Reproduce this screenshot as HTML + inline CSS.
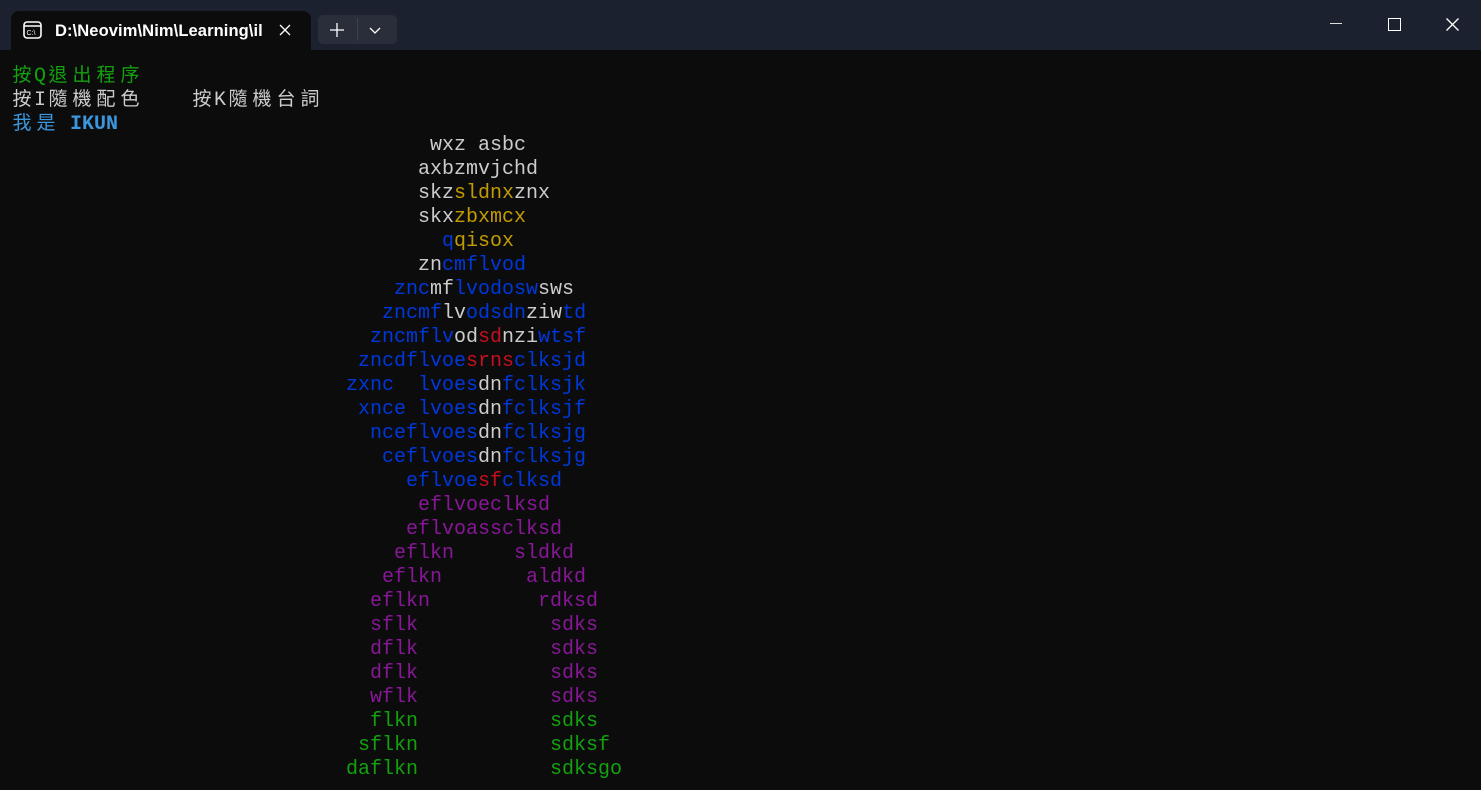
<!DOCTYPE html>
<html><head><meta charset="utf-8"><style>
*{margin:0;padding:0;box-sizing:border-box}
body{width:1481px;height:790px;background:#0c0c0c;overflow:hidden;position:relative;font-family:"Liberation Mono","Noto Sans CJK TC",monospace}
#tb{position:absolute;left:0;top:0;width:1481px;height:50px;background:#1c2130}
#tab{position:absolute;left:11px;top:11px;width:300px;height:39px;background:#0c0c0c;border-radius:8px 8px 0 0}
#tab .t{position:absolute;left:44px;top:11px;color:#fff;font:bold 16.5px "Liberation Sans",sans-serif;letter-spacing:0.1px}
#grp{position:absolute;left:318px;top:15px;width:79px;height:29px;background:#2a2e3a;border-radius:5px}
.r{position:absolute;height:24px;line-height:24px;font-size:20px;white-space:pre;color:#cccccc}
.c{display:inline-block;width:24px;text-align:center;font-family:"Noto Sans CJK TC",sans-serif;font-size:19px}
.w{color:#cccccc}.y{color:#c19c00}.b{color:#0037da}.d{color:#c50f1f}.p{color:#881798}.g{color:#13a10e}.l{color:#3a96dd}
#m{position:absolute;left:0;top:2px}
</style></head><body>
<div id="tb">
<div id="tab">
<svg style="position:absolute;left:12px;top:10px" width="19" height="18" viewBox="0 0 19 18"><rect x="1" y="1" width="17" height="16" rx="3" fill="none" stroke="#fff" stroke-width="1.6"/><line x1="1" y1="5" x2="18" y2="5" stroke="#fff" stroke-width="1.5"/><text x="3.5" y="14" font-size="7" fill="#fff" font-family="Liberation Sans">C:\</text></svg>
<div class="t">D:\Neovim\Nim\Learning\il</div>
<svg style="position:absolute;left:268px;top:13px" width="12" height="12"><path d="M1 1L11 11M11 1L1 11" stroke="#fff" stroke-width="1.3"/></svg>
</div>
<div id="grp">
<svg style="position:absolute;left:12px;top:8px" width="14" height="14"><path d="M7 0V14M0 7H14" stroke="#fff" stroke-width="1.3"/></svg>
<div style="position:absolute;left:39px;top:3px;width:1px;height:23px;background:#3c4050"></div>
<svg style="position:absolute;left:51px;top:12px" width="12" height="7"><path d="M1 1L6 6L11 1" stroke="#fff" stroke-width="1.3" fill="none"/></svg>
</div>
<div style="position:absolute;left:1330px;top:23px;width:12px;height:1px;background:#ddd"></div>
<div style="position:absolute;left:1388px;top:18px;width:13px;height:13px;border:1.3px solid #fff"></div>
<svg style="position:absolute;left:1446px;top:18px" width="13" height="13"><path d="M0.5 0.5L12.5 12.5M12.5 0.5L0.5 12.5" stroke="#fff" stroke-width="1.3"/></svg>
</div>
<div id="m">
<div class="r g" style="left:10px;top:60px"><span class="c">按</span>Q<span class="c">退</span><span class="c">出</span><span class="c">程</span><span class="c">序</span></div>
<div class="r w" style="left:10px;top:84px"><span class="c">按</span>I<span class="c">隨</span><span class="c">機</span><span class="c">配</span><span class="c">色</span>    <span class="c">按</span>K<span class="c">隨</span><span class="c">機</span><span class="c">台</span><span class="c">詞</span></div>
<div class="r l" style="left:10px;top:108px"><span class="c">我</span><span class="c">是</span> <b>IKUN</b></div>

<div class="r" style="left:430px;top:132px">wxz asbc</div>
<div class="r" style="left:418px;top:156px">axbzmvjchd</div>
<div class="r" style="left:418px;top:180px">skz<span class="y">sldnx</span>znx</div>
<div class="r" style="left:418px;top:204px">skx<span class="y">zbxmcx</span></div>
<div class="r" style="left:442px;top:228px"><span class="b">q</span><span class="y">qisox</span></div>
<div class="r" style="left:418px;top:252px">zn<span class="b">cmflvod</span></div>
<div class="r" style="left:394px;top:276px"><span class="b">znc</span>mf<span class="b">lvodosw</span>sws</div>
<div class="r" style="left:382px;top:300px"><span class="b">zncmf</span>lv<span class="b">odsdn</span>ziw<span class="b">td</span></div>
<div class="r" style="left:370px;top:324px"><span class="b">zncmflv</span>od<span class="d">sd</span>nzi<span class="b">wtsf</span></div>
<div class="r" style="left:358px;top:348px"><span class="b">zncdflvoe</span><span class="d">srns</span><span class="b">clksjd</span></div>
<div class="r" style="left:346px;top:372px"><span class="b">zxnc  lvoes</span>dn<span class="b">fclksjk</span></div>
<div class="r" style="left:358px;top:396px"><span class="b">xnce lvoes</span>dn<span class="b">fclksjf</span></div>
<div class="r" style="left:370px;top:420px"><span class="b">nceflvoes</span>dn<span class="b">fclksjg</span></div>
<div class="r" style="left:382px;top:444px"><span class="b">ceflvoes</span>dn<span class="b">fclksjg</span></div>
<div class="r" style="left:406px;top:468px"><span class="b">eflvoe</span><span class="d">sf</span><span class="b">clksd</span></div>
<div class="r p" style="left:418px;top:492px">eflvoeclksd</div>
<div class="r p" style="left:406px;top:516px">eflvoassclksd</div>
<div class="r p" style="left:394px;top:540px">eflkn     sldkd</div>
<div class="r p" style="left:382px;top:564px">eflkn       aldkd</div>
<div class="r p" style="left:370px;top:588px">eflkn         rdksd</div>
<div class="r p" style="left:370px;top:612px">sflk           sdks</div>
<div class="r p" style="left:370px;top:636px">dflk           sdks</div>
<div class="r p" style="left:370px;top:660px">dflk           sdks</div>
<div class="r p" style="left:370px;top:684px">wflk           sdks</div>
<div class="r g" style="left:370px;top:708px">flkn           sdks</div>
<div class="r g" style="left:358px;top:732px">sflkn           sdksf</div>
<div class="r g" style="left:346px;top:756px">daflkn           sdksgo</div>
</div>
</body></html>
